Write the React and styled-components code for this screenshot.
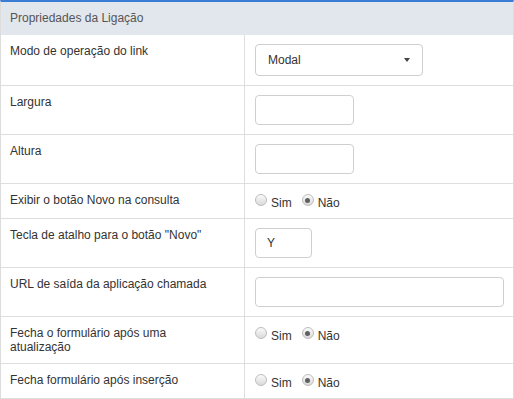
import React from "react"
import styled, { createGlobalStyle } from "styled-components"

const GlobalStyle = createGlobalStyle`
  html, body {
    margin: 0;
    padding: 0;
    background: #fff;
  }
  body {
    font-family: "Liberation Sans", Arial, sans-serif;
    font-size: 12px;
    color: #333;
  }
`

const Panel = styled.div`
  width: 514px;
  box-sizing: border-box;
  border-top: 2px solid #3b7dd6;
  border-left: 1px solid #dcdcdc;
  border-right: 1px solid #dcdcdc;
`

const Header = styled.div`
  height: 33px;
  display: flex;
  align-items: center;
  padding: 0 9px 1px;
  box-sizing: border-box;
  background: #e2e6ed;
  color: #555;
  font-size: 12px;
`

const Row = styled.div`
  display: grid;
  grid-template-columns: 244px 1fr;
  border-bottom: 1px solid #dedede;
`

const Label = styled.div`
  padding: 9px 20px 9px 9px;
  border-right: 1px solid #dedede;
  line-height: 14px;
  color: #333;
`

const Field = styled.div`
  padding: 9px 10px;
  display: flex;
  align-items: flex-start;
`

const SelectBox = styled.div`
  position: relative;
  width: 168px;
  height: 32px;
  box-sizing: border-box;
  border: 1px solid #cfcfcf;
  border-radius: 4px;
  padding: 0 12px;
  display: flex;
  align-items: center;
  color: #333;
  background: #fff;

  &::after {
    content: "";
    position: absolute;
    right: 12px;
    top: 13px;
    border-left: 3.5px solid transparent;
    border-right: 3.5px solid transparent;
    border-top: 4px solid #444;
  }
`

const TextInput = styled.input`
  width: ${(p) => p.$width}px;
  height: 30px;
  box-sizing: border-box;
  margin: 0;
  border: 1px solid #cfcfcf;
  border-radius: 4px;
  padding: 0 11px;
  font-family: "Liberation Sans", Arial, sans-serif;
  font-size: 12px;
  color: #333;
  background: #fff;
  outline: none;
`

const RadioGroup = styled.div`
  display: flex;
  align-items: center;
  height: 16px;
`

const Option = styled.label`
  display: flex;
  align-items: center;
  margin-right: 10px;
  color: #333;
`

const Dot = styled.span`
  position: relative;
  width: 12px;
  height: 12px;
  box-sizing: border-box;
  border-radius: 50%;
  border: 1px solid #bdbdbd;
  background: linear-gradient(#fafafa, #dadada);
  margin-right: 4px;
  margin-top: -2px;

  &::after {
    content: "";
    display: ${(p) => (p.$checked ? "block" : "none")};
    position: absolute;
    left: 2.5px;
    top: 2.5px;
    width: 5px;
    height: 5px;
    border-radius: 50%;
    background: #606060;
  }
`

const OptionText = styled.span`
  line-height: 16px;
  padding-top: 3px;
`

function YesNo({ value }) {
  return (
    <RadioGroup>
      <Option>
        <Dot $checked={value === "sim"} />
        <OptionText>Sim</OptionText>
      </Option>
      <Option>
        <Dot $checked={value === "nao"} />
        <OptionText>Não</OptionText>
      </Option>
    </RadioGroup>
  )
}

export default function App() {
  return (
    <>
      <GlobalStyle />
      <Panel>
        <Header>Propriedades da Ligação</Header>
        <Row>
          <Label>Modo de operação do link</Label>
          <Field>
            <SelectBox>Modal</SelectBox>
          </Field>
        </Row>
        <Row>
          <Label>Largura</Label>
          <Field>
            <TextInput $width={99} defaultValue="" />
          </Field>
        </Row>
        <Row>
          <Label>Altura</Label>
          <Field>
            <TextInput $width={99} defaultValue="" />
          </Field>
        </Row>
        <Row>
          <Label>Exibir o botão Novo na consulta</Label>
          <Field>
            <YesNo value="nao" />
          </Field>
        </Row>
        <Row>
          <Label>Tecla de atalho para o botão "Novo"</Label>
          <Field>
            <TextInput $width={57} defaultValue="Y" />
          </Field>
        </Row>
        <Row>
          <Label>URL de saída da aplicação chamada</Label>
          <Field>
            <TextInput $width={249} defaultValue="" />
          </Field>
        </Row>
        <Row>
          <Label>Fecha o formulário após uma atualização</Label>
          <Field>
            <YesNo value="nao" />
          </Field>
        </Row>
        <Row>
          <Label>Fecha formulário após inserção</Label>
          <Field>
            <YesNo value="nao" />
          </Field>
        </Row>
      </Panel>
    </>
  )
}
